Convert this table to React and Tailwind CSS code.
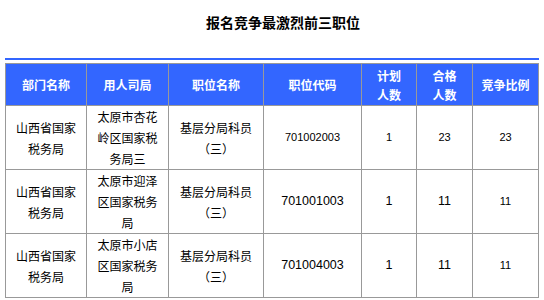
const cols = [81, 82, 95, 98, 55, 56, 66];

const headers = [
  ["部门名称"],
  ["用人司局"],
  ["职位名称"],
  ["职位代码"],
  ["计划", "人数"],
  ["合格", "人数"],
  ["竞争比例"],
];

const rows = [
  {
    dept: "山西省国家税务局",
    bureau: "太原市杏花岭区国家税务局三",
    pos: "基层分局科员（三）",
    code: "701002003",
    plan: "1",
    pass: "23",
    ratio: "23",
    small: true,
  },
  {
    dept: "山西省国家税务局",
    bureau: "太原市迎泽区国家税务局",
    pos: "基层分局科员（三）",
    code: "701001003",
    plan: "1",
    pass: "11",
    ratio: "11",
  },
  {
    dept: "山西省国家税务局",
    bureau: "太原市小店区国家税务局",
    pos: "基层分局科员（三）",
    code: "701004003",
    plan: "1",
    pass: "11",
    ratio: "11",
  },
];

const cjk = { fontFamily: '"Noto Sans CJK SC", "Noto Sans", sans-serif' };
const num = { fontFamily: '"Liberation Sans", Arial, sans-serif' };

export default function App() {
  return (
    <div className="w-[544px] h-[300px] bg-white overflow-hidden" style={cjk}>
      <div className="flex justify-center pl-[22px] pt-[12px]">
        <h1 className="text-[14px] leading-[20px] font-bold text-black">报名竞争最激烈前三职位</h1>
      </div>

      <div className="mt-[26px] ml-[5px] w-[534px] h-[2px] bg-[#3366ff]" />

      <table className="mt-[3px] ml-[5px] border-collapse table-fixed w-[534px]">
        <colgroup>
          {cols.map((w, i) => (
            <col key={i} style={{ width: w }} />
          ))}
        </colgroup>
        <thead>
          <tr className="h-[42px] bg-[#3366ff]">
            {headers.map((h, i) => (
              <th
                key={i}
                className="border border-[#999999] px-1 text-[12px] leading-[19px] font-bold text-white text-center align-middle"
              >
                {h.map((l, j) => (
                  <div key={j}>{l}</div>
                ))}
              </th>
            ))}
          </tr>
        </thead>
        <tbody>
          {rows.map((r, i) => (
            <tr key={i} className="h-[63px] text-black">
              <td className="border border-[#999999] px-[5px] text-[12px] leading-[21px] text-center align-middle">
                {r.dept}
              </td>
              <td className="border border-[#999999] px-[5px] text-[12px] leading-[21px] text-center align-middle">
                {r.bureau}
              </td>
              <td className="border border-[#999999] px-[5px] text-[12px] leading-[21px] text-center align-middle">
                {r.pos}
              </td>
              <td
                className={`border border-[#999999] text-center align-middle ${r.small ? "text-[11px]" : "text-[12.5px]"}`}
                style={num}
              >
                {r.code}
              </td>
              <td
                className={`border border-[#999999] text-center align-middle ${r.small ? "text-[11px]" : "text-[12.5px]"}`}
                style={num}
              >
                {r.plan}
              </td>
              <td
                className={`border border-[#999999] text-center align-middle ${r.small ? "text-[11px]" : "text-[12.5px]"}`}
                style={num}
              >
                {r.pass}
              </td>
              <td className="border border-[#999999] text-center align-middle text-[11px]" style={num}>
                {r.ratio}
              </td>
            </tr>
          ))}
        </tbody>
      </table>
    </div>
  );
}
